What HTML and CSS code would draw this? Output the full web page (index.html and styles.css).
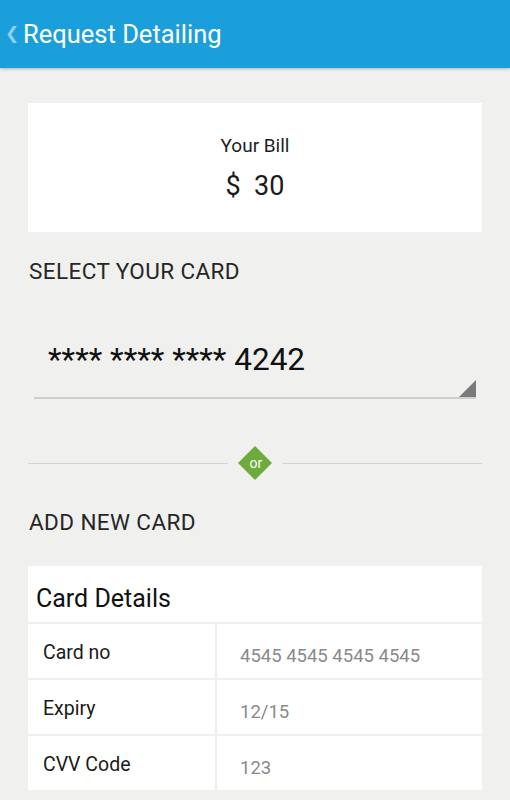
FILE: index.html
```html
<!DOCTYPE html>
<html lang="en">
<head>
    <meta charset="UTF-8">
    <meta name="viewport" content="width=device-width, initial-scale=1.0">
    <title>Request Detailing</title>
    <link rel="stylesheet" href="styles.css">
</head>
<body>
    <header class="topbar">
        <span class="back">&#10094;</span>
        <h1>Request Detailing</h1>
    </header>

    <div class="content">
        <div class="bill">
            <div class="bill-label">Your Bill</div>
            <div class="bill-amount">$&nbsp; 30</div>
        </div>

        <h2 class="section-title">SELECT YOUR CARD</h2>
        <div class="card-select">
            <span class="card-number">**** **** **** 4242</span>
            <span class="corner"></span>
        </div>

        <div class="divider">
            <span class="line"></span>
            <span class="or"><span>or</span></span>
            <span class="line"></span>
        </div>

        <h2 class="section-title">ADD NEW CARD</h2>
        <div class="details">
            <div class="details-title">Card Details</div>
            <div class="row">
                <div class="label">Card no</div>
                <div class="value">4545 4545 4545 4545</div>
            </div>
            <div class="row">
                <div class="label">Expiry</div>
                <div class="value">12/15</div>
            </div>
            <div class="row">
                <div class="label">CVV Code</div>
                <div class="value">123</div>
            </div>
        </div>
    </div>
</body>
</html>
```

FILE: styles.css
```css
body {
    font-family: Roboto, 'Noto Sans', sans-serif;
    margin: 0;
    background-color: #f0f0ee;
    color: #222;
    height: 800px;
    overflow: hidden;
}
.topbar {
    height: 68px;
    background-color: #1a9fda;
    display: flex;
    align-items: center;
    padding-left: 5px;
    box-shadow: 0 1px 3px rgba(0,0,0,0.25);
}
.back {
    color: #8fd0ef;
    font-size: 17px;
    margin-right: 4px;
    margin-top: -2px;
}
.topbar h1 {
    margin: 0;
    color: #fff;
    font-size: 25.5px;
    font-weight: 400;
}
.content {
    padding: 35px 28px 0;
}
.bill {
    background: #fff;
    height: 129px;
    display: flex;
    flex-direction: column;
    align-items: center;
    justify-content: center;
}
.bill-label {
    font-size: 19px;
    line-height: 24px;
    color: #1e1e1e;
    margin-top: 0;
}
.bill-amount {
    font-size: 27px;
    line-height: 32px;
    margin-top: 12px;
    color: #1a1a1a;
}
.section-title {
    font-size: 22.5px;
    font-weight: 400;
    letter-spacing: 0.4px;
    color: #262626;
    margin: 25px 1px 0;
    line-height: 28px;
}
.card-select {
    margin: 57px 6px 0;
    height: 55px;
    border-bottom: 2px solid #cfcfcf;
    position: relative;
}
.card-number {
    display: block;
    padding-left: 14px;
    font-size: 31.5px;
    line-height: 36px;
    color: #111;
}
.corner {
    position: absolute;
    right: 0;
    bottom: 0;
    width: 0;
    height: 0;
    border-left: 17px solid transparent;
    border-bottom: 17px solid #7a7a7a;
}
.divider {
    display: flex;
    align-items: center;
    margin-top: 52px;
}
.line {
    flex: 1;
    height: 1px;
    background: #d4d4d2;
}
.or {
    width: 24px;
    height: 24px;
    margin: 0 15px;
    background: #6eab3c;
    transform: rotate(45deg);
    display: flex;
    align-items: center;
    justify-content: center;
}
.or span {
    transform: rotate(-45deg);
    color: #fff;
    font-size: 14px;
    line-height: 14px;
    margin-top: -2px;
}
.divider + .section-title {
    margin-top: 33px;
}
.details {
    margin-top: 30px;
    background: #fff;
}
.details-title {
    height: 56px;
    line-height: 66px;
    padding-left: 8px;
    font-size: 25px;
    color: #111;
}
.row {
    display: grid;
    grid-template-columns: 187px 1fr;
    column-gap: 2px;
    border-top: 2px solid #efefef;
    background: #efefef;
}
.label, .value {
    background: #fff;
    height: 54px;
    box-sizing: border-box;
}
.label {
    font-size: 19.5px;
    line-height: 23px;
    color: #1a1a1a;
    padding: 17px 0 0 15px;
}
.value {
    font-size: 18.5px;
    line-height: 22px;
    color: #8a8a8a;
    padding: 21px 0 0 23px;
}
```
